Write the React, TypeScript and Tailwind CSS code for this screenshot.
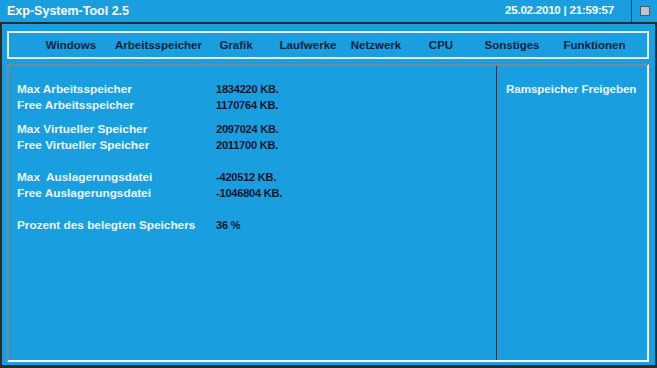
import React from 'react';

const navItems: { label: string; w: string }[] = [
  { label: 'Windows', w: 'w-[88px]' },
  { label: 'Arbeitsspeicher', w: 'w-[84px]' },
  { label: 'Grafik', w: 'w-[74px]' },
  { label: 'Laufwerke', w: 'w-[70px]' },
  { label: 'Netzwerk', w: 'w-[66px]' },
  { label: 'CPU', w: 'w-[64px]' },
  { label: 'Sonstiges', w: 'w-[78px]' },
  { label: 'Funktionen', w: 'w-[87px]' },
];

type Row = { label: string; value: string; gap?: string };

const rows: Row[] = [
  { label: 'Max Arbeitsspeicher', value: '1834220 KB.' },
  { label: 'Free Arbeitsspeicher', value: '1170764 KB.' },
  { label: 'Max Virtueller Speicher', value: '2097024 KB.', gap: 'mt-[8px]' },
  { label: 'Free Virtueller Speicher', value: '2011700 KB.' },
  { label: 'Max\u00a0 Auslagerungsdatei', value: '-420512 KB.', gap: 'mt-[16px]' },
  { label: 'Free Auslagerungsdatei', value: '-1046804 KB.' },
  { label: 'Prozent des belegten Speichers', value: '36 %', gap: 'mt-[16px]' },
];

export default function App() {
  return (
    <div
      className="w-[657px] h-[368px] flex flex-col bg-[#199fe0] font-bold text-[11.5px] leading-none overflow-hidden"
      style={{ fontFamily: '"Liberation Sans", Arial, sans-serif' }}
    >
      {/* Title bar */}
      <div className="h-[24px] flex items-stretch border-b-2 border-[#2b2b2b] shrink-0">
        <div className="flex-1 flex items-center pl-[7px] text-[12.5px] text-white">Exp-System-Tool 2.5</div>
        <div className="flex items-center pr-[17px] text-[11.5px] tracking-[-0.2px] text-white">25.02.2010 | 21:59:57</div>
        <div className="w-[26px] border-l border-[#2b2b2b] flex items-center justify-center">
          <div className="w-[10px] h-[10px] bg-[#b9c4cc] border border-[#4c5966]" />
        </div>
      </div>

      {/* Body */}
      <div className="flex-1 flex flex-col border-l-2 border-r-2 border-b-[3px] border-[#2b2b2b] pl-[5px] pr-[6px] pt-[7px] pb-[3px]">
        {/* Menu */}
        <div className="h-[28px] shrink-0 border-2 border-[#e3eef4] flex items-center pt-[1px] pl-[18px] text-[#0d1f3c]">
          {navItems.map((n) => (
            <div key={n.label} className={`${n.w} text-center whitespace-nowrap`}>
              {n.label}
            </div>
          ))}
        </div>

        {/* Content */}
        <div className="mt-[5px] flex-1 flex border-2 border-t-[#7b8791] border-l-[#7b8791] border-b-white border-r-white">
          <div className="w-[488px] border-r border-[#27394a] pt-[15px] pl-[8px]">
            {rows.map((r) => (
              <div key={r.label} className={`h-[16px] leading-[16px] flex items-baseline ${r.gap ?? ''}`}>
                <div className="w-[199px] text-[#eef7ff] text-[11.8px] whitespace-nowrap">{r.label}</div>
                <div className="text-[#0b1530] text-[11px] tracking-[-0.2px] whitespace-nowrap">{r.value}</div>
              </div>
            ))}
          </div>
          <div className="flex-1 pt-[15px] pl-[9px]">
            <div className="h-[16px] leading-[16px] text-[#eef7ff] whitespace-nowrap">Ramspeicher Freigeben</div>
          </div>
        </div>
      </div>
    </div>
  );
}
